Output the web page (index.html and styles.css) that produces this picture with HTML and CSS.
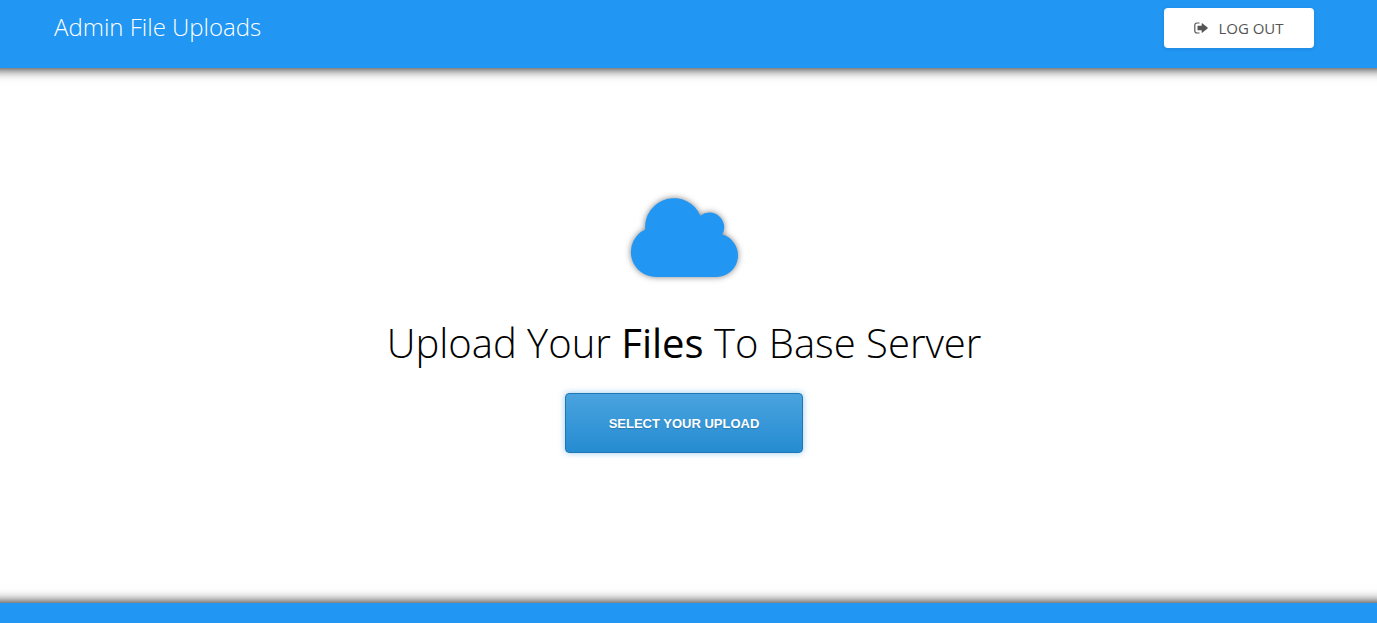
FILE: index.html
```html
<!DOCTYPE html>
<html lang="en">
<head>
<meta charset="utf-8">
<meta name="viewport" content="width=device-width, initial-scale=1">
<title>Admin File Uploads</title>
<link rel="stylesheet" href="styles.css">
</head>
<body>
<header class="topbar">
  <h1 class="topbar-title">Admin File Uploads</h1>
  <button class="logout" type="button">
    <svg class="logout-icon" viewBox="0 0 14 12" aria-hidden="true">
      <path d="M5.5 1H3Q.8 1 .8 3.2V8.8Q.8 11 3 11H5.5" fill="none" stroke="currentColor" stroke-width="1.2"/>
      <path d="M8.2 1.2 13.6 5.6Q14 6 13.6 6.4L8.2 10.8Q7.7 11.1 7.7 10.4V8.2H4Q3.5 8.2 3.5 7.7V4.3Q3.5 3.8 4 3.8H7.7V1.6Q7.7.9 8.2 1.2Z" fill="currentColor"/>
    </svg>
    <span>LOG OUT</span>
  </button>
</header>
<main class="content">
  <svg class="cloud" viewBox="0 0 107 79" aria-hidden="true">
    <path d="M25 79A25 25 0 0 1 14.2 31.4 28.8 28.8 0 0 1 69.4 17.7 14.7 14.7 0 0 1 91.2 36.6 21.6 21.6 0 0 1 85.6 79Z"/>
  </svg>
  <h2 class="headline">Upload Your <strong>Files</strong> To Base Server</h2>
  <button class="upload" type="button">SELECT YOUR UPLOAD</button>
</main>
<footer class="bottombar"></footer>
</body>
</html>
```
FILE: styles.css
```css
* {
  box-sizing: border-box;
}

body {
  margin: 0;
  min-height: 100vh;
  display: flex;
  flex-direction: column;
  background: #fff;
  color: #000;
  font-family: "Open Sans", sans-serif;
}

.topbar {
  display: flex;
  justify-content: space-between;
  align-items: flex-start;
  padding: 8px 63px 20px 54px;
  background: #2196f3;
  box-shadow: 0 -12px 12px 12px #000;
}

.topbar-title {
  margin: 0;
  color: #fff;
  font-size: 24px;
  line-height: 38px;
  font-weight: 300;
}

.logout {
  display: flex;
  align-items: center;
  justify-content: center;
  gap: 10px;
  width: 150px;
  height: 40px;
  padding: 0;
  border: 0;
  border-radius: 4px;
  background: #fff;
  color: #555;
  font: 400 15px/20px "Open Sans", sans-serif;
  box-shadow: 0 1px 4px rgba(0, 0, 0, 0.1);
  cursor: pointer;
}

.logout-icon {
  width: 14px;
  height: 12px;
}

.content {
  flex: 1;
  display: flex;
  flex-direction: column;
  align-items: center;
  padding: 130px 9px 0 0;
}

.cloud {
  width: 107px;
  height: 79px;
  overflow: visible;
  fill: #2196f3;
  filter: drop-shadow(0 0 3px rgba(0, 0, 0, 0.5));
}

.headline {
  margin: 36px 0 20px;
  font-size: 40px;
  line-height: 60px;
  font-weight: 300;
}

.headline strong {
  font-weight: 500;
}

.upload {
  width: 238px;
  height: 60px;
  padding: 2px 0 0;
  border: 1px solid #1f76b4;
  border-radius: 4px;
  background: linear-gradient(#4aa3df, #258cd1);
  color: #fff;
  font: 700 13px/20px "Liberation Sans", Arial, sans-serif;
  text-shadow: 0 1px 1px rgba(0, 0, 0, 0.2);
  box-shadow: 0 0 6px rgba(52, 152, 219, 0.5);
  cursor: pointer;
}

.bottombar {
  height: 20px;
  background: #2196f3;
  box-shadow: 0 12px 12px 12px #000;
}
```
